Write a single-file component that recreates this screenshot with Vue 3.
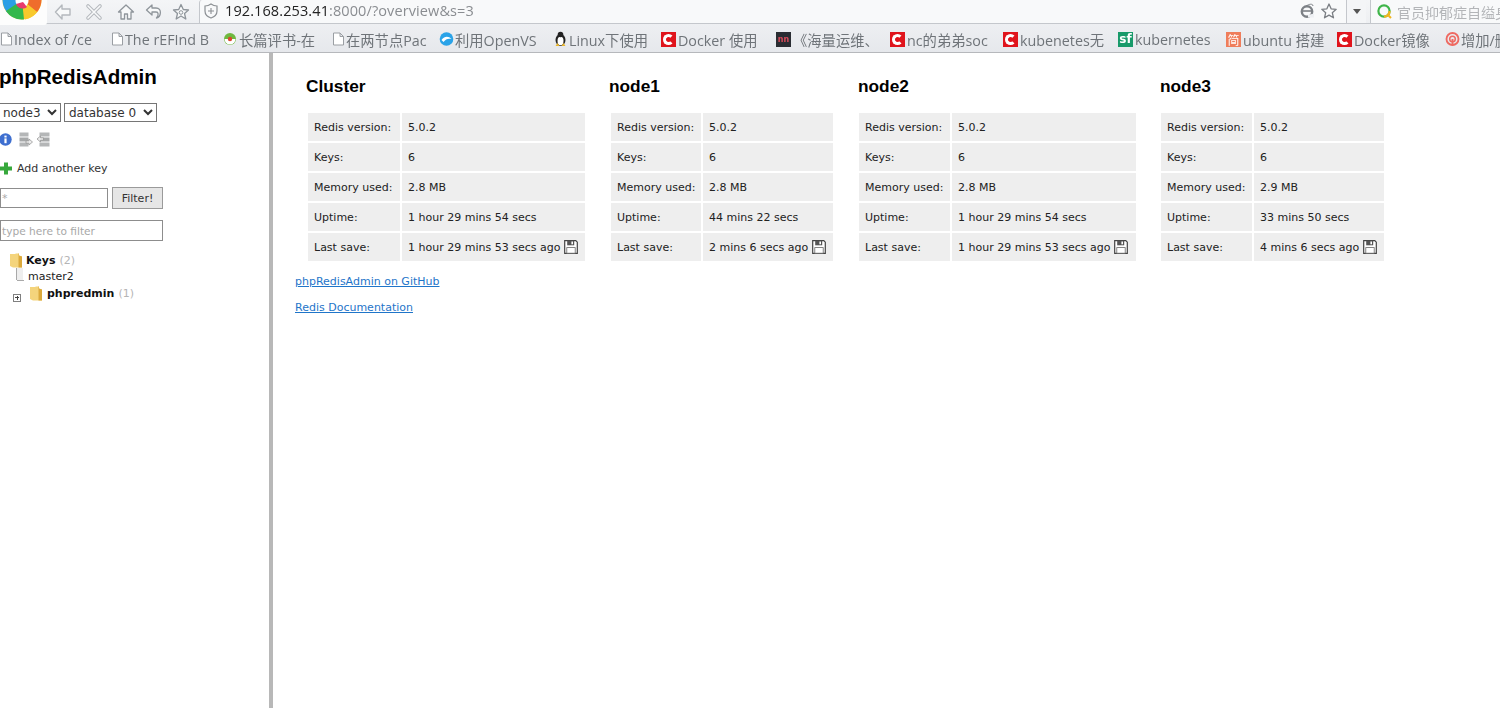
<script setup>
const bookmarks = [
  { t: 'Index of /ce', k: 'doc', w: 111 },
  { t: 'The rEFInd B', k: 'doc', w: 112 },
  { t: '长篇评书-在', k: 'ball', w: 109 },
  { t: '在两节点Pac', k: 'doc', w: 107 },
  { t: '利用OpenVS', k: 'edge', w: 114 },
  { t: 'Linux下使用', k: 'tux', w: 108 },
  { t: 'Docker 使用', k: 'c', w: 115 },
  { t: '《海量运维、', k: 'dark', w: 114 },
  { t: 'nc的弟弟soc', k: 'c', w: 113 },
  { t: 'kubenetes无', k: 'c', w: 115 },
  { t: 'kubernetes', k: 'sf', w: 108 },
  { t: 'ubuntu 搭建', k: 'jian', w: 111 },
  { t: 'Docker镜像', k: 'c', w: 108 },
  { t: '增加/删', k: 'pink', w: 60 },
]
const nodes = [
  { name: 'Cluster', mem: '2.8 MB', up: '1 hour 29 mins 54 secs', save: '1 hour 29 mins 53 secs ago', w1: 92, w2: 183, head: -2, gap: 26 },
  { name: 'node1', mem: '2.8 MB', up: '44 mins 22 secs', save: '2 mins 6 secs ago', w1: 90, w2: 130, head: -2, gap: 26 },
  { name: 'node2', mem: '2.8 MB', up: '1 hour 29 mins 54 secs', save: '1 hour 29 mins 53 secs ago', w1: 91, w2: 184, head: -1, gap: 25 },
  { name: 'node3', mem: '2.9 MB', up: '33 mins 50 secs', save: '4 mins 6 secs ago', w1: 91, w2: 130, head: -1, gap: 0 },
]
function rows(n) {
  return [
    ['Redis version:', '5.0.2'],
    ['Keys:', '6'],
    ['Memory used:', n.mem],
    ['Uptime:', n.up],
    ['Last save:', n.save],
  ]
}
</script>

<template>
  <div class="page">
    <header class="chrome">
      <div class="toolbar">
        <div class="logo-tab">
          <svg class="logo" width="46" height="25" viewBox="0 0 46 25">
            <circle cx="22" cy="0" r="19.5" fill="#f8c92c" />
            <path d="M22 0 L2.5 0 A19.5 19.5 0 0 0 10 15 Z" fill="#2b9fe6" />
            <path d="M22 0 L6 11 A19.5 19.5 0 0 0 24 19.4 Z" fill="#34b84c" />
            <path d="M22 0 L41.5 0 A19.5 19.5 0 0 1 37 12 Z" fill="#ef6d2c" />
            <path d="M22 0 L37 12 A19.5 19.5 0 0 1 25 19.4 Z" fill="#f8c92c" />
            <circle cx="22" cy="1" r="6.5" fill="#fff" />
            <path d="M16 4 A7 7 0 0 0 27 7 L23 2 Z" fill="#e8396d" />
          </svg>
        </div>
        <div class="nav">
          <svg width="20" height="20" viewBox="0 0 20 20" class="nav-ic"><path d="M9 3 L2.5 10 L9 17 V13 H17 V7 H9 Z" fill="#f8f9fa" stroke="#b4b8bd" stroke-width="1.4" stroke-linejoin="round"/></svg>
          <svg width="20" height="20" viewBox="0 0 20 20" class="nav-ic"><path d="M4 4 L16 16 M16 4 L4 16" stroke="#b4b8bd" stroke-width="3.6" stroke-linecap="round"/><path d="M4 4 L16 16 M16 4 L4 16" stroke="#f8f9fa" stroke-width="1.6" stroke-linecap="round"/></svg>
          <svg width="20" height="20" viewBox="0 0 20 20" class="nav-ic"><path d="M10 3 L2.5 10 H5 V17 H8.5 V12 H11.5 V17 H15 V10 H17.5 Z" fill="#f8f9fa" stroke="#8f959b" stroke-width="1.3" stroke-linejoin="round"/></svg>
          <svg width="20" height="20" viewBox="0 0 20 20" class="nav-ic"><path d="M8 3 L2.5 8 L8 13 V10 H12 C14.5 10 15 13 12.5 16 C17 15 18.5 6 12 6 H8 Z" fill="#f8f9fa" stroke="#8f959b" stroke-width="1.3" stroke-linejoin="round"/></svg>
          <svg width="20" height="20" viewBox="0 0 20 20" class="nav-ic"><path d="M10 2.5 L12.3 7.5 L17.5 8 L13.5 11.5 L14.8 17 L10 14 L5.2 17 L6.5 11.5 L2.5 8 L7.7 7.5 Z" fill="#f8f9fa" stroke="#8f959b" stroke-width="1.3" stroke-linejoin="round"/><circle cx="10" cy="10.5" r="1.8" fill="none" stroke="#8f959b"/></svg>
        </div>
        <div class="urlbar">
          <svg width="16" height="18" viewBox="0 0 16 18" class="shield"><path d="M8 2 C10 3.5 12 4 14 4 V9 C14 12.5 11 15 8 16 C5 15 2 12.5 2 9 V4 C4 4 6 3.5 8 2 Z" fill="none" stroke="#8b8f93" stroke-width="1.2"/><path d="M8 6 V12 M5 9 H11" stroke="#8b8f93" stroke-width="1.1"/></svg>
          <span class="url"><span class="host">192.168.253.41</span><span class="rest">:8000/?overview&amp;s=3</span></span>
          <span class="grow"></span>
          <svg width="16" height="16" viewBox="0 0 16 16" class="e-ic"><circle cx="8" cy="8.5" r="5.2" fill="none" stroke="#7d8186" stroke-width="2.4"/><path d="M4 8 H13" stroke="#7d8186" stroke-width="1.6"/><path d="M9 12 L15 10.5 V14.5 H9 Z" fill="#eef0f3"/><path d="M6 4 C10 0.5 14 0.5 14 3" fill="none" stroke="#7d8186"/></svg>
          <svg width="18" height="18" viewBox="0 0 18 18" class="star"><path d="M9 2 L11.1 6.8 L16.2 7.3 L12.3 10.7 L13.5 15.8 L9 13.1 L4.5 15.8 L5.7 10.7 L1.8 7.3 L6.9 6.8 Z" fill="#fafbfc" stroke="#7a7e83" stroke-width="1.3" stroke-linejoin="round"/></svg>
        </div>
        <div class="drop"><span class="tri"></span></div>
        <div class="search">
          <svg width="17" height="17" viewBox="0 0 17 17" class="q"><circle cx="8" cy="8" r="5.6" fill="none" stroke="#3fb54a" stroke-width="2.2"/><path d="M8 13.6 A5.6 5.6 0 0 0 13.6 8" fill="none" stroke="#f3b51c" stroke-width="2.2"/><path d="M12.2 12.2 L15 15" stroke="#f3b51c" stroke-width="2"/></svg>
          <span class="search-text">官员抑郁症自缢身</span>
        </div>
      </div>
      <nav class="bookmarks">
        <span v-for="b in bookmarks" :key="b.t" class="bm" :style="{ width: b.w + 'px' }">
          <svg v-if="b.k === 'doc'" width="13" height="16" viewBox="0 0 13 16" class="bi"><path d="M1.5 2 H8 L11.5 5.5 V14 H1.5 Z M8 2 V5.5 H11.5" fill="#fff" stroke="#9a9ea3"/></svg>
          <svg v-else-if="b.k === 'ball'" width="15" height="16" viewBox="0 0 15 16" class="bi"><circle cx="7" cy="8" r="6" fill="#6fb83f"/><path d="M1.5 8 A5.5 5.5 0 0 0 12.5 8 Z" fill="#fff"/><circle cx="7" cy="8" r="2.2" fill="#d9482f"/></svg>
          <svg v-else-if="b.k === 'edge'" width="15" height="16" viewBox="0 0 15 16" class="bi"><circle cx="7.5" cy="8" r="6.8" fill="#2aa3e8"/><path d="M2.5 9 C5.5 5 9.5 5 12.5 8 C9.5 7 6.5 8 4.5 11 Z" fill="#fff"/></svg>
          <svg v-else-if="b.k === 'tux'" width="15" height="16" viewBox="0 0 14 16" class="bi"><ellipse cx="7" cy="9" rx="5" ry="6" fill="#222"/><ellipse cx="7" cy="10" rx="3" ry="4.2" fill="#fff"/><circle cx="7" cy="3.5" r="2.8" fill="#222"/><path d="M2 15 H6 L4 12 Z M8 15 H12 L10 12 Z" fill="#e9b52b"/></svg>
          <span v-else-if="b.k === 'c'" class="bi square red"><span class="c-in"></span></span>
          <span v-else-if="b.k === 'dark'" class="bi square dark">nn</span>
          <span v-else-if="b.k === 'sf'" class="bi square sf">sf</span>
          <span v-else-if="b.k === 'jian'" class="bi square jian">简</span>
          <svg v-else width="15" height="16" viewBox="0 0 16 16" class="bi"><circle cx="8" cy="8" r="6.4" fill="none" stroke="#ee6a62" stroke-width="2"/><circle cx="8" cy="8" r="3" fill="none" stroke="#ee6a62" stroke-width="1.6"/><path d="M8 8 V15" stroke="#ee6a62" stroke-width="2"/></svg>
          <span class="bt">{{ b.t }}</span>
        </span>
      </nav>
    </header>

    <div class="body">
      <aside class="sidebar">
        <h1>phpRedisAdmin</h1>
        <div class="selects">
          <select class="sel s1"><option>node3</option></select>
          <select class="sel s2"><option>database 0</option></select>
        </div>
        <div class="tools">
          <svg width="13" height="13" viewBox="0 0 13 13" class="t1"><circle cx="6.5" cy="6.5" r="6.2" fill="#3e6fd0"/><rect x="5.4" y="5.4" width="2.2" height="4.8" fill="#fff"/><rect x="5.4" y="2.6" width="2.2" height="1.9" fill="#fff"/></svg>
          <svg width="14" height="15" viewBox="0 0 14 15" class="t2"><rect x="0.5" y="0.5" width="9" height="4" fill="#b4b6b7"/><rect x="0.5" y="5.5" width="9" height="4" fill="#a6a8a9"/><rect x="0.5" y="10.5" width="9" height="4" fill="#b4b6b7"/><path d="M7 8.8 H10 V7 L13.5 10 L10 13 V11.2 H7 Z" fill="#ececec" stroke="#8e8e8e" stroke-width=".7"/></svg>
          <svg width="14" height="15" viewBox="0 0 14 15" class="t3"><rect x="3.5" y="0.5" width="10" height="4" fill="#b4b6b7"/><rect x="3.5" y="5.5" width="10" height="4" fill="#a6a8a9"/><rect x="3.5" y="10.5" width="10" height="4" fill="#b4b6b7"/><path d="M7.5 5.8 H4.5 V4 L1 7 L4.5 10 V8.2 H7.5 Z" fill="#ececec" stroke="#8e8e8e" stroke-width=".7"/></svg>
        </div>
        <div class="add">
          <svg width="13" height="13" viewBox="0 0 13 13"><path d="M4 0.5 H8 V4.5 H12 V8.5 H8 V12.5 H4 V8.5 H0 V4.5 H4 Z" fill="#37a83c"/></svg>
          <span>Add another key</span>
        </div>
        <div class="filter-row">
          <input class="inp star-inp" value="*" />
          <button class="btn">Filter!</button>
        </div>
        <input class="inp wide" placeholder="type here to filter" />
        <div class="tree">
          <div class="line v"></div>
          <div class="node root">
            <svg width="14" height="15" viewBox="0 0 14 15"><path d="M1 1 H6 L7 0.5 H10 V2.5 L13 3.5 V14.5 H4 L1 13 Z" fill="#f4d47c"/><path d="M9.5 0.5 H10 V2.5 L13 3.5 V14.5 H9.5 Z" fill="#dba93c"/></svg>
            <b>Keys</b><span class="cnt">(2)</span>
          </div>
          <div class="node leaf"><span class="tick"></span>master2</div>
          <div class="node folder">
            <span class="plus"></span>
            <svg width="14" height="15" viewBox="0 0 14 15"><path d="M1 1 H6 L7 0.5 H10 V2.5 L13 3.5 V14.5 H4 L1 13 Z" fill="#f4d47c"/><path d="M9.5 0.5 H10 V2.5 L13 3.5 V14.5 H9.5 Z" fill="#dba93c"/></svg>
            <b>phpredmin</b><span class="cnt">(1)</span>
          </div>
        </div>
      </aside>
      <div class="splitter"></div>
      <main class="content">
        <div class="servers">
          <section v-for="n in nodes" :key="n.name" class="server" :style="{ marginRight: n.gap + 'px' }">
            <h2 :style="{ marginLeft: n.head + 'px' }">{{ n.name }}</h2>
            <div class="rows">
              <div v-for="r in rows(n)" :key="r[0]" class="row">
                <div class="k" :style="{ width: n.w1 + 'px' }">{{ r[0] }}</div>
                <div class="v" :style="{ width: n.w2 + 'px' }">
                  <span>{{ r[1] }}</span>
                  <svg v-if="r[0] === 'Last save:'" class="disk" width="14" height="14" viewBox="0 0 14 14"><path d="M0.7 0.7 H11.8 L13.3 2.2 V13.3 H0.7 Z" fill="#fff" stroke="#444" stroke-width="1.2"/><rect x="3.2" y="0.7" width="7" height="4.6" fill="#555"/><rect x="7.4" y="1.5" width="1.6" height="2.8" fill="#fff"/><rect x="2.8" y="7.6" width="8.4" height="5.6" fill="#fff" stroke="#666" stroke-width=".8"/></svg>
                </div>
              </div>
            </div>
          </section>
        </div>
        <p class="lnk first"><a href="#">phpRedisAdmin on GitHub</a></p>
        <p class="lnk"><a href="#">Redis Documentation</a></p>
      </main>
    </div>
  </div>
</template>

<style>
html, body { margin: 0; background: #fff; overflow: hidden; }
</style>

<style scoped>
.page { width: 1500px; height: 708px; overflow: hidden; display: flex; flex-direction: column; font-family: "DejaVu Sans", Verdana, sans-serif; color: #222; }
.chrome { height: 53px; flex: none; background: linear-gradient(#f4f5f7, #e6e8ec); border-bottom: 1px solid #b6b8bc; box-sizing: border-box; filter: blur(0.3px); }
.toolbar { height: 23px; display: flex; align-items: stretch; border-bottom: 1px solid #c4c7cc; }
.logo-tab { width: 47px; height: 25px; background: #fdfdfd; overflow: hidden; flex: none; border-radius: 0 0 3px 0; position: relative; z-index: 1; }
.logo { display: block; }
.nav { display: flex; width: 152px; padding: 2px 0 0 6px; box-sizing: border-box; flex: none; }
.nav-ic { width: 20px; height: 20px; flex: none; }
.nav-ic:nth-child(2) { margin-left: 11px; }
.nav-ic:nth-child(3) { margin-left: 12px; }
.nav-ic:nth-child(4) { margin-left: 8px; }
.nav-ic:nth-child(5) { margin-left: 7px; }
.urlbar { width: 1147px; flex: none; background: #f8f9fa; border-left: 1px solid #c4c7cc; border-radius: 3px 0 0 0; display: flex; align-items: center; padding: 0 0 2px 3px; box-sizing: border-box; height: 23px; }
.shield { margin-right: 6px; }
.url { font-family: "Open Sans", "DejaVu Sans", sans-serif; font-size: 14.5px; letter-spacing: 0.1px; white-space: nowrap; }
.host { color: #222; }
.rest { color: #8a8d91; }
.grow { flex: 1; }
.e-ic { margin-right: 5px; }
.star { margin-right: 8px; }
.drop { width: 20px; flex: none; border-left: 1px solid #c4c7cc; box-sizing: border-box; display: flex; align-items: center; justify-content: center; background: #f4f5f7; }
.tri { width: 0; height: 0; border-left: 4px solid transparent; border-right: 4px solid transparent; border-top: 5px solid #555; }
.search { flex: 1; margin-left: 4px; background: #f8f9fa; border-left: 1px solid #c4c7cc; display: flex; align-items: center; padding-left: 5px; overflow: hidden; min-width: 0; }
.q { flex: none; }
.search-text { font-family: "Noto Sans CJK SC", sans-serif; font-size: 14px; color: #b3b5b8; margin-left: 4px; white-space: nowrap; }
.bookmarks { height: 29px; box-sizing: border-box; padding-top: 1px; display: flex; align-items: center; white-space: nowrap; overflow: hidden; }
.bm { display: flex; align-items: center; flex: none; font-family: "Open Sans", "Noto Sans CJK SC", sans-serif; font-size: 14.3px; color: #6f7479; }
.bt { white-space: nowrap; }
.bi { flex: none; margin-right: 1px; }
.square { width: 15px; height: 15px; display: inline-flex; align-items: center; justify-content: center; margin-right: 2px; }
.red { background: #e0141c; }
.c-in { width: 11px; height: 11px; border-radius: 50%; border: 3px solid #fff; border-right-color: transparent; box-sizing: border-box; }
.dark { background: #2a2d33; color: #d94a5a; font: bold 8px/15px "DejaVu Sans", sans-serif; }
.sf { background: #189a6a; color: #fff; font: bold 12px "DejaVu Sans", sans-serif; }
.jian { background: #ef7d5b; color: #fff; font-size: 12px; font-family: "Noto Sans CJK SC", sans-serif; }
.body { flex: 1; display: flex; min-height: 0; }
.sidebar { width: 269px; flex: none; box-sizing: border-box; padding-top: 12px; font-size: 11px; }
h1 { margin: 0 0 0 -1px; font: bold 20.6px/24px "Liberation Sans", Arial, sans-serif; color: #000; white-space: nowrap; }
.selects { display: flex; gap: 3px; margin: 14px 0 0 -2px; }
.sel { height: 19px; font: 12px "DejaVu Sans", sans-serif; color: #333; background: #fff; border: 1px solid #767676; padding: 0; margin: 0; box-sizing: border-box; }
.s1 { width: 63px; }
.s2 { width: 93px; }
.tools { display: flex; align-items: center; margin-top: 10px; height: 15px; }
.t1 { margin-left: -1px; }
.t2 { margin-left: 7px; }
.t3 { margin-left: 3px; }
.add { display: flex; align-items: center; gap: 4px; margin-top: 14px; height: 15px; font-size: 11px; color: #333; }
.filter-row { display: flex; align-items: center; gap: 4px; margin-top: 11px; }
.inp { box-sizing: border-box; height: 20px; border: 1px solid #8d8d8d; font: 11px "DejaVu Sans", sans-serif; background: #fff; padding: 0 0 0 1px; outline: none; color: #aaa; margin: 0; }
.inp::placeholder { color: #a8a8a8; }
.star-inp { width: 108px; }
.btn { width: 51px; height: 22px; box-sizing: border-box; border: 1px solid #9a9a9a; background: #e6e6e6; font: 11px "DejaVu Sans", sans-serif; color: #333; padding: 0; }
.wide { display: block; width: 163px; height: 21px; margin: 11px 0 0 0; font-size: 10.6px; }
.tree { position: relative; margin-top: 11px; padding-left: 9px; }
.line.v { position: absolute; left: 16px; top: 16px; height: 12px; border-left: 1px solid #a9a9a9; }
.node { height: 16.5px; display: flex; align-items: center; white-space: nowrap; font-size: 11px; color: #222; }
.node b { color: #111; margin-left: 3px; }
.folder b { margin-left: 4px; }
.cnt { color: #b5b5b5; margin-left: 4px; }
.leaf { position: relative; margin-left: 12px; padding-left: 7px; }
.tick { position: absolute; left: -4px; top: 11px; width: 7px; border-top: 1px solid #a9a9a9; }
.folder { margin-left: 4px; }
.plus { width: 8px; height: 8px; box-sizing: border-box; border: 1px solid #808080; margin-right: 8px; align-self: flex-end; flex: none; background: linear-gradient(#444,#444) center/4px 1px no-repeat, linear-gradient(#444,#444) center/1px 4px no-repeat, #fff; }
.splitter { width: 4px; flex: none; background: #b8b8b8; }
.content { flex: 1; padding: 0 0 0 22px; font-size: 11px; min-width: 0; }
.servers { display: flex; margin-top: 20px; padding-left: 13px; }
.server { flex: none; }
h2 { margin: 0; font: bold 17.3px/26px "Liberation Sans", Arial, sans-serif; color: #000; }
.rows { margin-top: 14px; display: flex; flex-direction: column; gap: 2px; }
.row { display: flex; gap: 2px; height: 28px; }
.k, .v { background: #eeeeee; box-sizing: border-box; padding-left: 6px; display: flex; align-items: center; white-space: nowrap; color: #222; }
.disk { margin-left: 4px; }
.lnk { margin: 14px 0 0 0; height: 12px; line-height: 12px; font-size: 11px; }
.lnk.first { margin-top: 15px; }
.lnk a { color: #1f75c9; }
</style>
